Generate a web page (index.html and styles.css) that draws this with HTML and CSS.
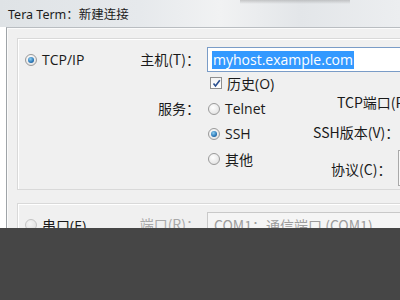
FILE: index.html
```html
<!DOCTYPE html>
<html>
<head>
<meta charset="utf-8">
<link rel="stylesheet" href="styles.css">
</head>
<body>
<div class="screen">
  <div class="titlebar"><span class="title">Tera Term：新建连接</span></div>
  <div class="frame">
    <div class="group g1">
      <div class="cola">
        <label class="opt"><span class="radio on"></span><span>TCP/IP</span></label>
      </div>
      <div class="colb">
        <div class="lbl host">主机(T)：</div>
        <div class="lbl svc">服务：</div>
      </div>
      <div class="colc">
        <div class="input"><span class="sel">myhost.example.com</span></div>
        <label class="opt chk"><span class="checkbox"><svg width="9" height="9" viewBox="0 0 9 9"><path d="M1.5 4.5 L3.5 7 L7.8 1.2" fill="none" stroke="#2a4f8f" stroke-width="1.6"/></svg></span><span>历史(O)</span></label>
        <div class="svcrow">
          <div class="radios">
            <label class="opt"><span class="radio"></span><span>Telnet</span></label>
            <label class="opt"><span class="radio on"></span><span>SSH</span></label>
            <label class="opt"><span class="radio"></span><span>其他</span></label>
          </div>
          <div class="params">
            <div class="prow p1">TCP端口(P)：</div>
            <div class="prow p2">SSH版本(V)：</div>
            <div class="prow p3"><span class="plbl">协议(C)：</span><span class="combo"></span></div>
          </div>
        </div>
      </div>
    </div>
    <div class="group g2">
      <div class="cola">
        <label class="opt dis"><span class="radio off"></span><span class="dark">串口(E)</span></label>
      </div>
      <div class="colb">
        <div class="lbl grey">端口(R)：</div>
      </div>
      <div class="colc">
        <div class="input com">COM1：通信端口 (COM1)</div>
      </div>
    </div>
  </div>
  <div class="shade"></div>
</div>
</body>
</html>
```
FILE: styles.css
```css
html, body {
  margin: 0;
  padding: 0;
}
body {
  width: 400px;
  height: 300px;
  overflow: hidden;
  font-family: "Segoe UI", "Open Sans", "Noto Sans CJK SC", sans-serif;
  color: #1a1a1a;
}
.screen {
  width: 400px;
  height: 300px;
  overflow: hidden;
  display: flex;
  flex-direction: column;
}
.titlebar {
  height: 27px;
  flex: none;
  background:
    linear-gradient(180deg, rgba(120,120,120,0.35) 0, rgba(120,120,120,0) 4px) 240px 0 / 110px 27px no-repeat,
    linear-gradient(90deg, #dfe3e6 0%, #e6e9ec 35%, #f1f2f3 55%, #e3e6e9 75%, #eceef0 100%);
  display: flex;
  align-items: center;
  padding-left: 8px;
  box-sizing: border-box;
}
.title {
  font-size: 12.5px;
  color: #1c1c1c;
  font-family: "Noto Sans", "Noto Sans CJK SC", sans-serif;
}
.frame {
  height: 201px;
  flex: none;
  margin-left: 6px;
  border-left: 1px solid #9fa4a8;
  border-top: 1px solid #b9bdc1;
  background: #f0f0f0;
  box-shadow: inset 1px 1px 0 #fbfbfb;
  padding: 10px 0 0 10px;
  box-sizing: border-box;
  overflow: hidden;
}
.group {
  border: 1px solid #d9d9d9;
  border-right: none;
  box-shadow: inset 1px 1px 0 #ffffff;
  display: grid;
  grid-template-columns: 122px 67px 220px;
  box-sizing: border-box;
  width: 400px;
}
.g1 {
  height: 152px;
  padding-top: 8px;
}
.g2 {
  margin-top: 13px;
  padding-top: 8px;
  height: 60px;
}
.cola {
  padding-left: 7px;
}
.opt {
  display: flex;
  align-items: center;
  height: 25px;
  font-size: 14px;
  gap: 5px;
  white-space: nowrap;
}
.radio {
  width: 12px;
  height: 12px;
  border-radius: 50%;
  border: 1px solid #9a9a9a;
  background: radial-gradient(circle at 40% 35%, #ffffff 0, #e6e6e6 70%, #d0d0d0 100%);
  box-sizing: border-box;
  flex: none;
  position: relative;
}
.radio.on::after {
  content: "";
  position: absolute;
  left: 2px;
  top: 2px;
  width: 6px;
  height: 6px;
  border-radius: 50%;
  background: radial-gradient(circle at 40% 35%, #8fd0f0 0, #2a77b8 60%, #173e6a 100%);
}
.radio.off {
  border-color: #c4c4c4;
  background: radial-gradient(circle at 40% 35%, #f4f4f4 0, #dcdcdc 100%);
}
.colb {
  display: flex;
  flex-direction: column;
  align-items: flex-end;
  padding-right: 7px;
}
.lbl {
  font-size: 14px;
  height: 25px;
  line-height: 25px;
  white-space: nowrap;
  font-family: "Noto Sans CJK SC", sans-serif;
}
.svc {
  margin-top: 24px;
}
.grey {
  color: #a8a8a8;
}
.dark {
  color: #1a1a1a;
}
.input {
  height: 25px;
  border: 1px solid #7a9cc7;
  background: #ffffff;
  box-sizing: border-box;
  display: flex;
  align-items: center;
  padding-left: 4px;
  width: 220px;
  font-size: 14px;
}
.sel {
  background: #3399ff;
  color: #ffffff;
  line-height: 18px;
  padding: 0 1px;
  white-space: nowrap;
}
.chk {
  height: 20px;
  margin-top: 1px;
  padding-left: 3px;
}
.checkbox {
  width: 12px;
  height: 12px;
  border: 1px solid #8f8f8f;
  background: linear-gradient(180deg, #f4f4f4, #ffffff);
  box-sizing: border-box;
  display: flex;
  align-items: center;
  justify-content: center;
  flex: none;
}
.svcrow {
  display: flex;
  margin-top: 3px;
}
.radios {
  width: 96px;
  padding-left: 1px;
  flex: none;
}
.params {
  display: flex;
  flex-direction: column;
  width: 124px;
  flex: none;
  font-size: 14px;
  font-family: "Noto Sans CJK SC", sans-serif;
}
.prow {
  white-space: nowrap;
  height: 25px;
  line-height: 25px;
}
.p1 {
  margin-top: -6px;
  padding-left: 33px;
}
.p2 {
  margin-top: 5px;
  padding-left: 9px;
}
.p3 {
  margin-top: 12px;
  display: flex;
  align-items: center;
  padding-left: 27px;
}
.plbl {
  width: 58px;
  flex: none;
}
.combo {
  width: 20px;
  height: 34px;
  border: 1px solid #a9a9a9;
  border-right: none;
  background: #f7f7f7;
  margin-left: 9px;
  margin-top: -4px;
  flex: none;
}
.com {
  border-color: #c9c9c9;
  background: #f5f5f5;
  color: #9d9d9d;
  padding-left: 6px;
  font-family: "Noto Sans CJK SC", sans-serif;
  white-space: nowrap;
}
.shade {
  flex: 1;
  background: #464646;
}
```
